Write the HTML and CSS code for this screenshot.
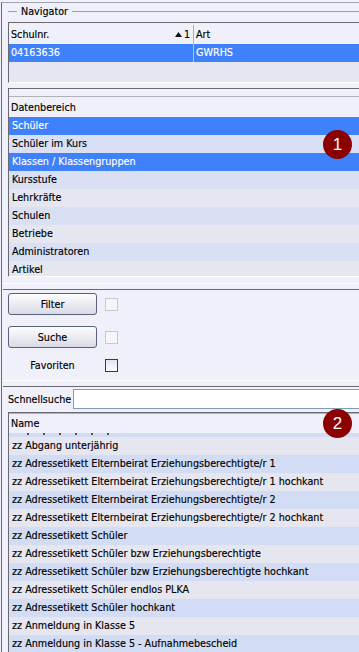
FILE: index.html
```html
<!DOCTYPE html>
<html lang="de">
<head>
  <meta charset="UTF-8">
  <title>Navigator</title>
  <link rel="stylesheet" href="styles.css">
</head>
<body>
  <div class="badge badge-one">1</div>
  <div class="badge badge-two">2</div>

  <div class="frame">
    <section class="nav">
      <div class="nav-title"><span>Navigator</span></div>

      <div class="grid schools">
        <div class="grid-head">
          <div class="col col-nr">
            <span>Schulnr.</span>
            <span class="sort">
              <svg width="7" height="5" viewBox="0 0 7 5"><polygon points="0,5 7,5 3.5,0" fill="#111"/></svg>1
            </span>
          </div>
          <div class="col col-art">Art</div>
        </div>
        <div class="grid-row selected">
          <div class="col col-nr">04163636</div>
          <div class="col col-art">GWRHS</div>
        </div>
        <div class="grid-empty"></div>
      </div>

      <div class="grid areas">
        <div class="grid-gap"></div>
        <div class="list-head">Datenbereich</div>
        <div class="list areas-list">
          <div class="item selected">Schüler</div>
          <div class="item">Schüler im Kurs</div>
          <div class="item selected">Klassen / Klassengruppen</div>
          <div class="item">Kursstufe</div>
          <div class="item">Lehrkräfte</div>
          <div class="item">Schulen</div>
          <div class="item">Betriebe</div>
          <div class="item">Administratoren</div>
          <div class="item">Artikel</div>
        </div>
      </div>
    </section>

    <div class="splitter"></div>

    <section class="tools">
      <div class="tool-row">
        <button class="btn">Filter</button>
        <span class="check disabled"></span>
      </div>
      <div class="tool-row">
        <button class="btn">Suche</button>
        <span class="check disabled"></span>
      </div>
      <div class="tool-row fav-row">
        <span class="fav-label">Favoriten</span>
        <span class="check"></span>
      </div>
    </section>

    <div class="splitter tight"></div>

    <section class="search">
      <div class="search-row">
        <label class="search-label" for="quick">Schnellsuche</label>
        <input class="search-input" id="quick" type="text">
      </div>

      <div class="grid names">
        <div class="list-head">Name</div>
        <div class="list names-list">
          <div class="item partial">
            <i></i><i></i><i></i><i></i><i></i><i></i>
          </div>
          <div class="item">zz Abgang unterjährig</div>
          <div class="item">zz Adressetikett Elternbeirat Erziehungsberechtigte/r 1</div>
          <div class="item">zz Adressetikett Elternbeirat Erziehungsberechtigte/r 1 hochkant</div>
          <div class="item">zz Adressetikett Elternbeirat Erziehungsberechtigte/r 2</div>
          <div class="item">zz Adressetikett Elternbeirat Erziehungsberechtigte/r 2 hochkant</div>
          <div class="item">zz Adressetikett Schüler</div>
          <div class="item">zz Adressetikett Schüler bzw Erziehungsberechtigte</div>
          <div class="item">zz Adressetikett Schüler bzw Erziehungsberechtigte hochkant</div>
          <div class="item">zz Adressetikett Schüler endlos PLKA</div>
          <div class="item">zz Adressetikett Schüler hochkant</div>
          <div class="item">zz Anmeldung in Klasse 5</div>
          <div class="item">zz Anmeldung in Klasse 5 - Aufnahmebescheid</div>
        </div>
      </div>
    </section>
  </div>
</body>
</html>
```

FILE: styles.css
```css
* {
  box-sizing: border-box;
}
html, body {
  margin: 0;
  padding: 0;
}
body {
  position: relative;
  width: 359px;
  height: 652px;
  overflow: hidden;
  background: #f0f0fa;
  font-family: "DejaVu Sans Condensed", "DejaVu Sans", sans-serif;
  font-stretch: condensed;
  font-size: 10.7px;
  color: #000;
  -webkit-text-stroke: 0.15px #000;
}
.frame {
  margin: 2px 0 0 1px;
  height: 650px;
  border-left: 1px solid #6c6c74;
  border-top: 1px solid #a4a4ae;
  overflow: hidden;
}

/* navigator group */
.nav {
  padding-left: 6px;
}
.nav-title {
  display: flex;
  align-items: center;
  height: 17px;
  margin-bottom: 2px;
}
.nav-title::before {
  content: "";
  width: 9px;
  height: 1px;
  background: #a0a0aa;
}
.nav-title::after {
  content: "";
  flex: 1;
  height: 1px;
  background: #a0a0aa;
}
.nav-title span {
  padding: 0 4px;
}

/* grids */
.grid {
  border-top: 1px solid #6a6a72;
  border-left: 1px solid #6a6a72;
  border-bottom: 1px solid #fff;
}
.grid-head {
  display: flex;
  height: 21px;
  padding-top: 2px;
  align-items: center;
}
.grid-row {
  display: flex;
  height: 18px;
  line-height: 18px;
}
.col {
  white-space: nowrap;
}
.col-nr {
  width: 184px;
  padding-left: 2px;
  display: flex;
  justify-content: space-between;
  align-items: center;
}
.col-art {
  flex: 1;
  padding-left: 2px;
  border-left: 1px solid #b0b0ba;
  align-self: stretch;
  display: flex;
  align-items: center;
}
.grid-row .col-art {
  border-left-color: #a8c4ff;
}
.sort {
  display: flex;
  align-items: center;
  gap: 2px;
  padding-right: 3px;
}
.sort svg {
  margin-top: -1px;
}
.grid-empty {
  height: 20px;
  background: #e6e6f0;
}
.selected {
  background: #3f80fb;
  color: #fff;
  -webkit-text-stroke-color: #fff;
}

.areas {
  margin-top: 5px;
}
.grid-gap {
  height: 7px;
}
.list-head {
  height: 21px;
  line-height: 22px;
  padding-left: 2px;
  border-top: 1px solid #b0b0ba;
}
.list {
  overflow: hidden;
}
.areas-list {
  height: 159px;
}
.item {
  height: 18px;
  line-height: 18px;
  padding-left: 3px;
  white-space: nowrap;
  background: #e6e6f0;
}
.areas-list .item:nth-child(even) {
  background: #d9e0f3;
}
.areas-list .item.selected {
  background: #3f80fb;
  color: #fff;
}

/* splitters */
.splitter {
  margin: 6px 0 0 1px;
  height: 7px;
  border-top: 1px solid #fff;
  border-bottom: 1px solid #6a6a72;
}
.splitter.tight {
  margin-top: 0;
}

/* filter / search buttons */
.tools {
  display: flex;
  flex-direction: column;
  gap: 11px;
  padding: 3px 0 8px 6px;
}
.tool-row {
  display: flex;
  align-items: center;
  gap: 8px;
}
.btn {
  width: 89px;
  height: 22px;
  padding: 0;
  font: inherit;
  color: #000;
  border: 1px solid #56627e;
  border-radius: 3px;
  background: linear-gradient(#fdfdff, #dadae6);
}
.check {
  width: 13px;
  height: 13px;
  border: 1px solid #333c4e;
  background: linear-gradient(#e4e4ee, #fbfbff);
}
.check.disabled {
  border-color: #c8c8d2;
  background: #f5f5fc;
}
.fav-row {
  height: 13px;
}
.fav-label {
  width: 89px;
  text-align: center;
}

/* quick search */
.search {
  padding: 2px 0 0 6px;
}
.search-row {
  display: flex;
  align-items: center;
  height: 20px;
}
.search-label {
  width: 65px;
  white-space: nowrap;
}
.search-input {
  flex: 1;
  height: 20px;
  border: 1px solid #7f9db9;
  border-right: none;
  background: #fff;
  outline: none;
}
.names {
  margin-top: 3px;
  border-bottom: none;
}
.names .list-head {
  border-top: 1px solid #b0b0ba;
  height: 20px;
  line-height: 20px;
}
.names-list .item:nth-child(odd) {
  background: #d2dcf4;
}
.item.partial {
  height: 4px;
  display: flex;
  gap: 14px;
  padding-left: 18px;
}
.item.partial i {
  width: 2px;
  height: 2px;
  background: #555;
}

/* numbered markers */
.badge {
  position: absolute;
  width: 29px;
  height: 29px;
  border-radius: 50%;
  background: #8b0000;
  color: #fff;
  font-family: "Liberation Sans", sans-serif;
  font-size: 17px;
  -webkit-text-stroke: 0;
  display: flex;
  align-items: center;
  justify-content: center;
  z-index: 2;
}
.badge-one {
  left: 323px;
  top: 130px;
}
.badge-two {
  left: 323px;
  top: 409px;
}
```
